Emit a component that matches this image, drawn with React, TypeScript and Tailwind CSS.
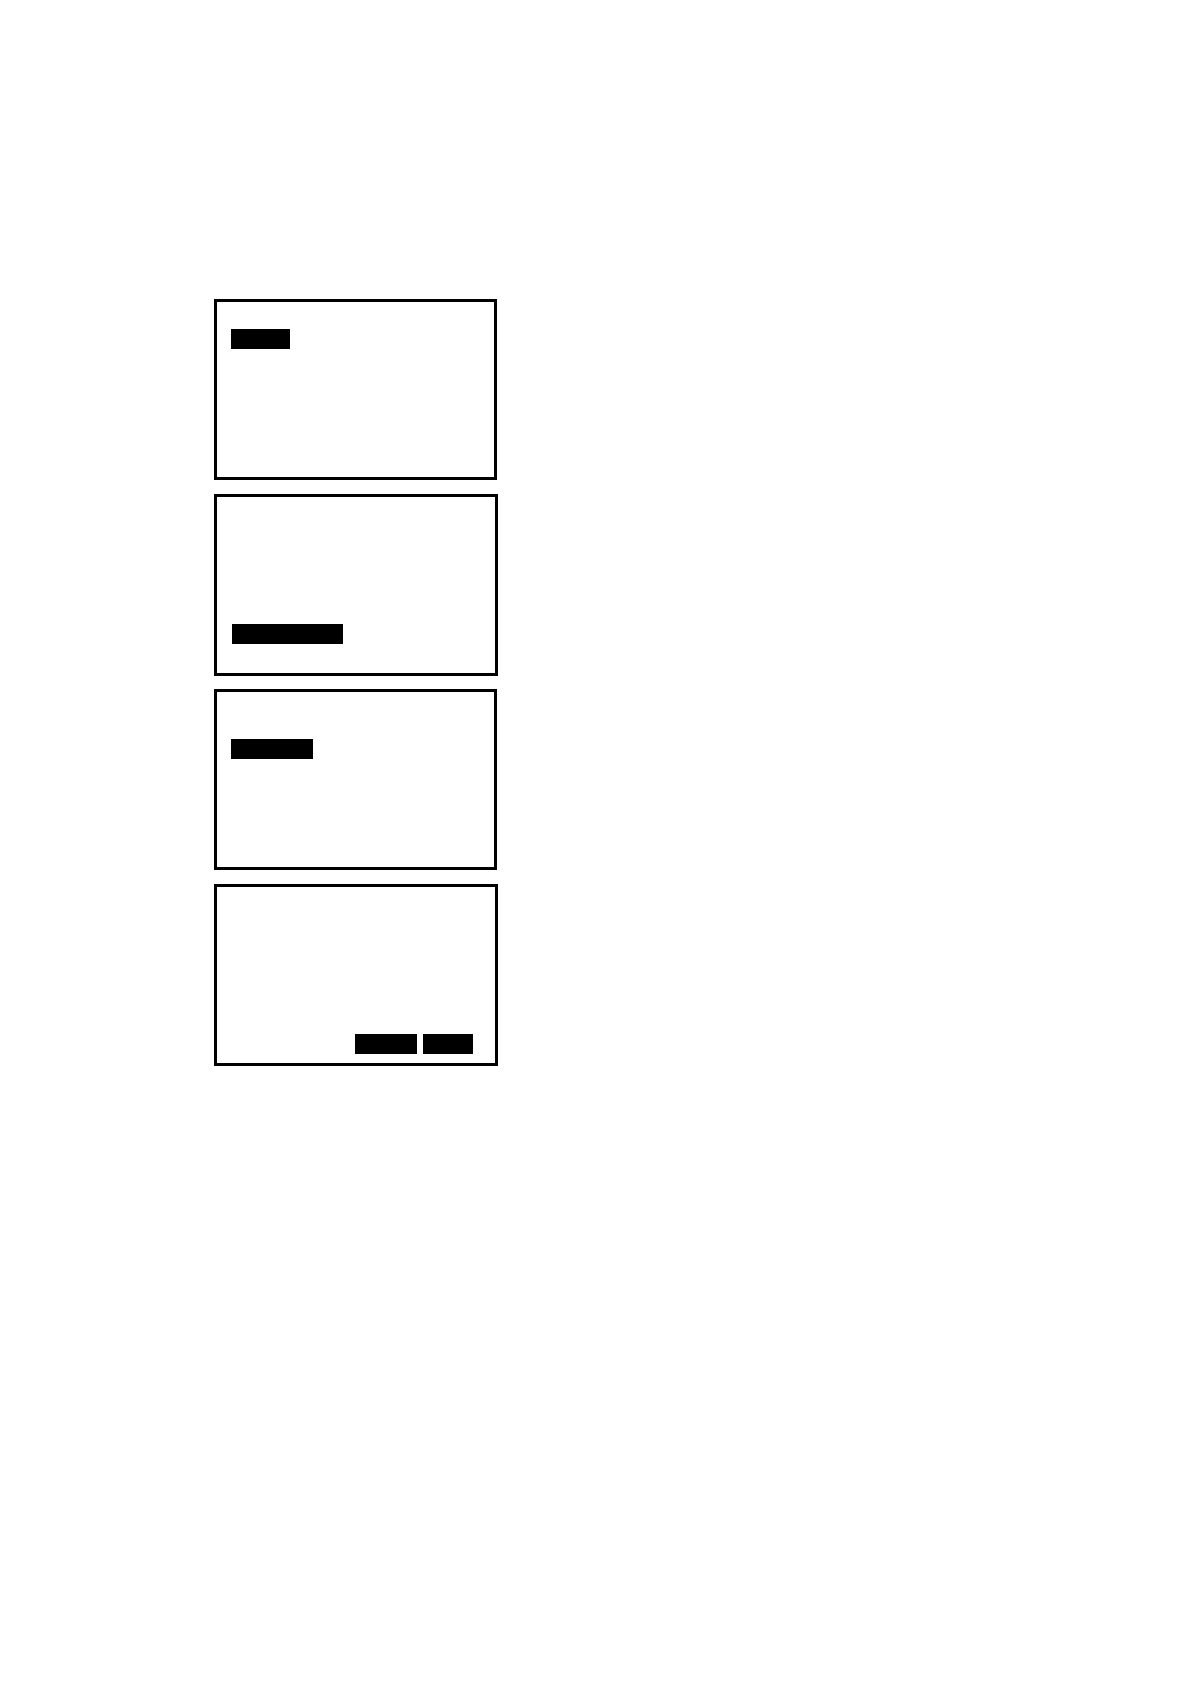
interface Panel {
    id: string;
    frame: string;
    row: string;
    bars: string[];
}

const NARROW_FRAME = 'max-w-[283px] mb-[14px] pl-[14px] pr-[22px]';
const WIDE_FRAME = 'max-w-[284px] mb-[13px] pl-[15px] pr-[22px]';

// The bars sit on a grid of 20px lines inside each frame
const panels: Panel[] = [
    { id: 'first', frame: NARROW_FRAME, row: 'pt-[27px] pb-[128px]', bars: ['w-[59px]'] },
    { id: 'second', frame: WIDE_FRAME, row: 'pt-[127px] pb-[29px]', bars: ['w-[111px]'] },
    { id: 'third', frame: NARROW_FRAME, row: 'pt-[47px] pb-[108px]', bars: ['w-[82px]'] },
    { id: 'fourth', frame: WIDE_FRAME, row: 'justify-end pt-[147px] pb-[9px]', bars: ['w-[62px]', 'w-[50px]'] },
];

function PanelFrame({ panel }: { panel: Panel }) {
    return (
        <section className={`w-full border-3 border-black ${panel.frame}`}>
            <div className={`flex gap-[6px] ${panel.row}`}>
                {panel.bars.map(width => (
                    <div key={width} className={`h-5 bg-black ${width}`} />
                ))}
            </div>
        </section>
    );
}

export default function App() {
    return (
        <main className="flex min-h-screen flex-col bg-white px-[214px] pt-[299px]">
            {panels.map(panel => (
                <PanelFrame key={panel.id} panel={panel} />
            ))}
        </main>
    );
}
